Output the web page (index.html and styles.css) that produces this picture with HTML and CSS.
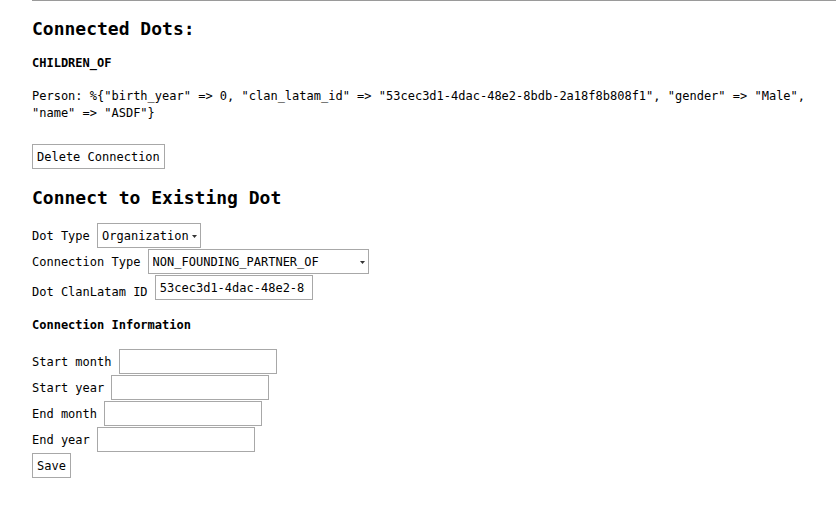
FILE: index.html
```html
<!DOCTYPE html>
<html lang="en">
<head>
<meta charset="utf-8">
<title>Connected Dots</title>
<link rel="stylesheet" href="styles.css">
</head>
<body>
<main class="page">
  <div class="rule"></div>
  <h2 class="title">Connected Dots:</h2>
  <h4 class="subtitle">CHILDREN_OF</h4>
  <p class="dot-data">Person: %{"birth_year" =&gt; 0, "clan_latam_id" =&gt; "53cec3d1-4dac-48e2-8bdb-2a18f8b808f1", "gender" =&gt; "Male", "name" =&gt; "ASDF"}</p>
  <div class="actions"><button type="button" class="btn">Delete Connection</button></div>

  <h2 class="title title-connect">Connect to Existing Dot</h2>
  <form class="form">
    <div class="fields">
      <div class="row">
        <label for="dot-type">Dot Type</label>
        <select id="dot-type" class="select select-type"><option>Organization</option></select>
      </div>
      <div class="row">
        <label for="conn-type">Connection Type</label>
        <select id="conn-type" class="select select-conn"><option>NON_FOUNDING_PARTNER_OF</option></select>
      </div>
      <div class="row">
        <label for="dot-id" class="label-low">Dot ClanLatam ID</label>
        <input id="dot-id" class="input input-id" type="text" value="53cec3d1-4dac-48e2-8bdb-2a18f8b808f1">
      </div>
    </div>

    <h4 class="subtitle subtitle-info">Connection Information</h4>

    <div class="fields">
      <div class="row">
        <label for="start-month">Start month</label>
        <input id="start-month" class="input" type="text">
      </div>
      <div class="row">
        <label for="start-year">Start year</label>
        <input id="start-year" class="input" type="text">
      </div>
      <div class="row">
        <label for="end-month">End month</label>
        <input id="end-month" class="input" type="text">
      </div>
      <div class="row">
        <label for="end-year">End year</label>
        <input id="end-year" class="input" type="text">
      </div>
      <div class="row">
        <button type="submit" class="btn">Save</button>
      </div>
    </div>
  </form>
</main>
</body>
</html>
```

FILE: styles.css
```css
* {
  box-sizing: border-box;
}

html, body {
  margin: 0;
  padding: 0;
  background: #ffffff;
}

body {
  font-family: "DejaVu Sans Mono", "Liberation Mono", monospace;
  font-size: 12px;
  color: #000000;
}

.page {
  padding-left: 32px;
}

.rule {
  border-top: 1px solid #9a9a9a;
}

.title {
  margin: 17px 0 0;
  font-size: 18px;
  line-height: 21px;
  font-weight: bold;
}

.title-connect {
  margin-top: 18px;
}

.subtitle {
  margin: 17px 0 0;
  font-size: 12px;
  line-height: 14px;
  font-weight: bold;
}

.subtitle-info {
  margin-top: 18px;
}

.dot-data {
  margin: 18px 0 0;
  line-height: 17px;
  max-width: 800px;
}

.actions {
  margin-top: 22px;
  display: flex;
}

.form {
  margin: 15px 0 0;
}

.fields {
  display: flex;
  flex-direction: column;
  gap: 1px;
}

.subtitle-info + .fields {
  margin-top: 17px;
}

.row {
  display: flex;
  align-items: center;
  column-gap: 1ch;
  height: 25px;
}

.row label {
  line-height: 14px;
}

.label-low {
  padding-top: 8px;
}

.btn,
.select,
.input {
  font-family: "DejaVu Sans Mono", "Liberation Mono", monospace;
  font-size: 12px;
  color: #000000;
  background-color: #ffffff;
  border: 1px solid #a8a8a8;
  border-radius: 0;
  height: 25px;
  margin: 0;
}

.btn {
  padding: 2px 4px 0;
  line-height: 21px;
}

.select {
  -webkit-appearance: none;
  appearance: none;
  padding: 0 0 0 4px;
  background-image: url("data:image/svg+xml;utf8,<svg xmlns='http://www.w3.org/2000/svg' width='5' height='3' viewBox='0 0 5 3'><path d='M0 0h5L2.5 3z' fill='%23333'/></svg>");
  background-repeat: no-repeat;
}

.select-type {
  width: 104px;
  background-position: 94px 11px;
}

.select-conn {
  width: 221px;
  background-position: 211px 11px;
}

.input {
  width: 158px;
  padding: 0 7px 0 4px;
}
```
